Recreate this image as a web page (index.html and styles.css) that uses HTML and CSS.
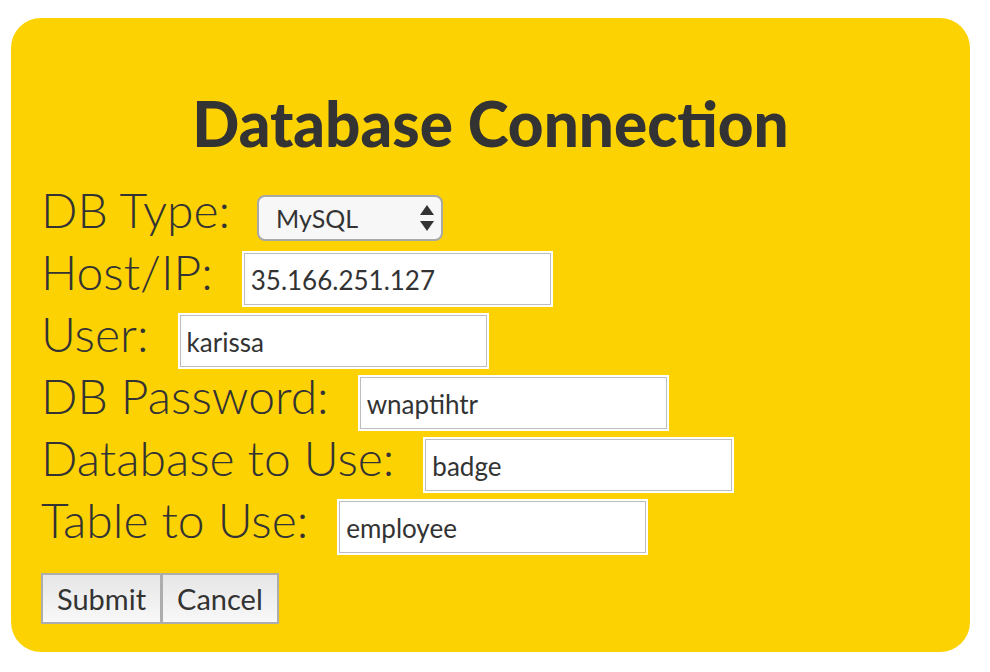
FILE: index.html
```html
<!DOCTYPE html>
<html>
<head>
<meta charset="utf-8">
<title>Database Connection</title>
<link rel="stylesheet" href="styles.css">
</head>
<body>
<div class="card">
  <h1 class="title">Database Connection</h1>
  <form class="form">
    <div class="row"><label class="label label-type">DB Type:</label><span class="select"><span class="select-text">MySQL</span><svg class="arrows" width="16" height="28" viewBox="0 0 16 28"><path d="M8 1 L15 11 L1 11 Z" fill="#333"/><path d="M1 17 L15 17 L8 27 Z" fill="#333"/></svg></span></div>
    <div class="row"><label class="label">Host/IP:</label><input class="field" type="text" value="35.166.251.127"></div>
    <div class="row"><label class="label">User:</label><input class="field" type="text" value="karissa"></div>
    <div class="row"><label class="label">DB Password:</label><input class="field" type="text" value="wnaptihtr"></div>
    <div class="row"><label class="label">Database to Use:</label><input class="field" type="text" value="badge"></div>
    <div class="row"><label class="label">Table to Use:</label><input class="field" type="text" value="employee"></div>
    <div class="buttons"><button class="btn" type="button">Submit</button><button class="btn" type="button">Cancel</button></div>
  </form>
</div>
</body>
</html>
```

FILE: styles.css
```css
html, body {
  margin: 0;
  padding: 0;
  background: #ffffff;
}

body {
  font-family: "Source Sans Pro", Lato, "Open Sans", sans-serif;
  color: #333333;
}

.card {
  box-sizing: border-box;
  width: 959px;
  height: 634px;
  margin: 18px 0 0 11px;
  padding: 0 30px;
  background: #fdd202;
  border-radius: 30px;
}

.title {
  margin: 0;
  padding-top: 65px;
  font-size: 62px;
  line-height: 80px;
  font-weight: 900;
  text-align: center;
  color: #333333;
}

.form {
  margin: 16px 0 0;
}

.row {
  height: 62px;
  line-height: 62px;
  white-space: nowrap;
}

.label {
  font-size: 48px;
  font-weight: 300;
  margin-right: 31px;
  vertical-align: baseline;
}

.label-type {
  margin-right: 27px;
}

.field {
  box-sizing: border-box;
  width: 307px;
  height: 52px;
  padding: 2px 6px 0;
  font-family: Lato, "Open Sans", sans-serif;
  font-size: 26px;
  color: #333333;
  background: #ffffff;
  border: 1px solid #bdbdbd;
  box-shadow: 0 0 0 2px #ffffff;
  outline: none;
  vertical-align: baseline;
}

.select {
  display: inline-flex;
  align-items: center;
  justify-content: space-between;
  box-sizing: border-box;
  width: 186px;
  height: 46px;
  padding: 0 6px 0 17px;
  line-height: 46px;
  background: #f7f7f7;
  border: 2px solid #a8a8a8;
  border-radius: 8px;
  font-size: 25px;
  vertical-align: baseline;
}

.select-text {
  line-height: 42px;
}

.arrows {
  display: block;
}

.buttons {
  display: flex;
  margin-top: 22px;
}

.btn {
  height: 51px;
  padding: 0 14px;
  margin: 0;
  font-family: Lato, "Open Sans", sans-serif;
  font-size: 29px;
  color: #333333;
  background: linear-gradient(#e6e6e6, #f8f8f8);
  border: 2px solid #adadad;
  border-radius: 0;
}

.btn + .btn {
  border-left-width: 1px;
}
```
